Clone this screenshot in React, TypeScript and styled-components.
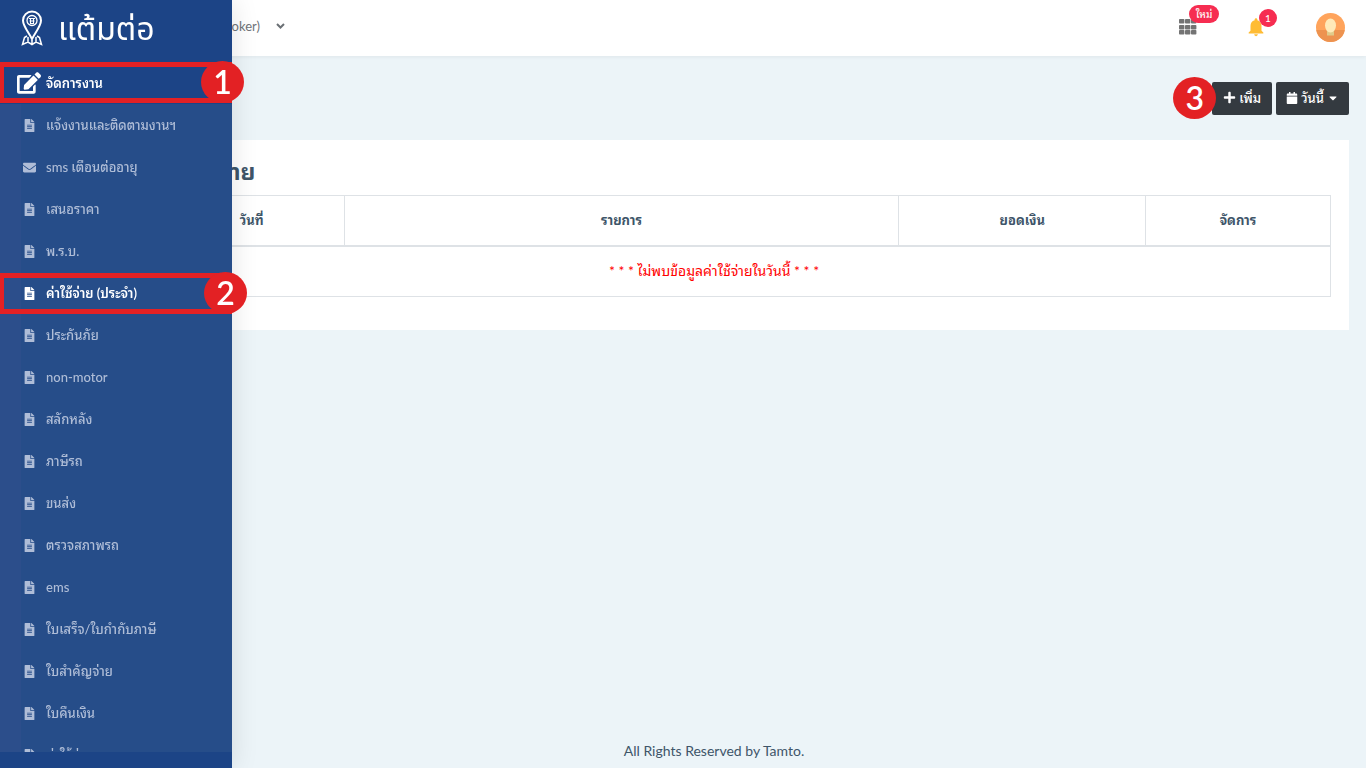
import React from "react";
import styled, { createGlobalStyle } from "styled-components";
import { FaEdit, FaFileAlt, FaEnvelope, FaPlus, FaCalendar, FaCaretDown } from "react-icons/fa";
import { MdNotifications } from "react-icons/md";

const GlobalStyle = createGlobalStyle`
  * { box-sizing: border-box; }
  body {
    margin: 0;
    background: #ecf4f8;
    color: #3e5569;
    font-family: Lato, "Noto Sans Thai Looped", Loma, Waree, "Noto Sans", sans-serif;
    font-size: 13px;
    line-height: 20px;
  }
  button { font: inherit; border: 0; padding: 0; background: none; cursor: pointer; }
  a { color: inherit; text-decoration: none; }
  svg { display: block; flex: none; }
`;

const Page = styled.div`
  display: flex;
  flex-direction: column;
  min-height: 100vh;
  padding-left: 62px;
`;

const TopBar = styled.header`
  display: flex;
  align-items: center;
  justify-content: space-between;
  height: 56px;
  padding: 0 21px 0 117px;
  background: #fff;
  box-shadow: 0 1px 4px rgba(0, 0, 0, 0.06);
`;

const AccountButton = styled.button`
  display: flex;
  align-items: center;
  gap: 16px;
  width: 106px;
  justify-content: flex-end;
  margin-bottom: 4px;
  color: #6f7479;
  white-space: nowrap;
`;

const Tools = styled.div`
  display: flex;
  align-items: center;
  margin-bottom: 2px;
`;

const ToolButton = styled.button<{ $gap?: number }>`
  position: relative;
  margin-right: ${(p) => p.$gap ?? 0}px;
`;

const Badge = styled.span<{ $wide?: boolean }>`
  position: absolute;
  left: ${(p) => (p.$wide ? 10 : 14)}px;
  top: ${(p) => (p.$wide ? -14 : -7)}px;
  width: ${(p) => (p.$wide ? 30 : 18)}px;
  height: 18px;
  border-radius: 9px;
  background: #f62d51;
  color: #fff;
  font-size: 10px;
  line-height: 18px;
  font-weight: 500;
  text-align: center;
`;

const Content = styled.main`
  flex: 1;
  padding: 26px 17px 0;
`;

const Actions = styled.div`
  display: flex;
  justify-content: flex-end;
  gap: 4px;
  margin-bottom: 25px;
`;

const DarkButton = styled.button<{ $inset: number }>`
  position: relative;
  display: flex;
  align-items: center;
  gap: 3px;
  height: 33px;
  && { padding: 0 ${(p) => p.$inset}px 2px; }
  border-radius: 2px;
  background: #343a40;
  color: #fff;
  font-weight: 500;
`;

const Card = styled.section`
  padding: 17px 18px 33px;
  background: #fff;
`;

const Title = styled.h1`
  margin: 0 0 10px;
  font-size: 23px;
  line-height: 28px;
  font-weight: 700;
`;

const Table = styled.table`
  width: 100%;
  table-layout: fixed;
  border-collapse: collapse;
  text-align: center;
  th, td { padding: 0 0 1px; border: 1px solid #dee2e6; }
  th { height: 50px; font-weight: 700; border-bottom-width: 2px; }
  td { height: 51px; }
`;

const EmptyCell = styled.td`
  color: #f00;
  font-size: 14px;
  font-weight: 400;
`;

const Footer = styled.footer`
  padding: 7px 0;
  font-size: 14px;
  text-align: center;
`;

const Sidebar = styled.aside`
  position: fixed;
  inset: 0 auto 0 0;
  display: flex;
  flex-direction: column;
  width: 232px;
  background: #1c4486;
  color: #fff;
  box-shadow: 2px 0 24px rgba(0, 0, 0, 0.1);
`;

const Brand = styled.a`
  display: flex;
  align-items: center;
  gap: 14px;
  height: 62px;
  padding: 0 20px 6px;
  font-family: Lato, "Noto Sans Thai", "Noto Sans", sans-serif;
  font-size: 32px;
  line-height: 40px;
  font-weight: 400;
`;

const GroupLink = styled.a`
  position: relative;
  display: flex;
  align-items: center;
  gap: 5px;
  height: 42px;
  padding-left: 17px;
  font-weight: 600;
`;

const Menu = styled.nav`
  flex: 1;
  min-height: 0;
  overflow: hidden;
  margin-bottom: 16px;
  background: linear-gradient(90deg, #2c4e8b 21px, #264d89 21px);
`;

const MenuList = styled.ul`
  margin: 0;
  padding: 0;
  list-style: none;
`;

const MenuLink = styled.a<{ $active?: boolean }>`
  display: flex;
  align-items: center;
  gap: 10px;
  height: 42px;
  padding-left: 23px;
  color: ${(p) => (p.$active ? "#fff" : "#afbdd7")};
  font-weight: ${(p) => (p.$active ? 600 : 500)};
`;

const Outline = styled.span<{ $top: number }>`
  position: absolute;
  left: 0;
  top: ${(p) => p.$top}px;
  width: 232px;
  height: 41px;
  border: solid #e32124;
  border-width: 5px 0 5px 4px;
  pointer-events: none;
`;

const Step = styled.span<{ $left: number; $top: number }>`
  position: absolute;
  left: ${(p) => p.$left}px;
  top: ${(p) => p.$top}px;
  width: 43px;
  height: 42px;
  border-radius: 50%;
  background: #e32124;
  color: #fff;
  font-family: Lato, sans-serif;
  font-size: 32px;
  line-height: 41px;
  font-weight: 600;
  text-align: center;
`;

const items = [
  "แจ้งงานและติดตามงานฯ",
  "sms เตือนต่ออายุ",
  "เสนอราคา",
  "พ.ร.บ.",
  "ค่าใช้จ่าย (ประจำ)",
  "ประกันภัย",
  "non-motor",
  "สลักหลัง",
  "ภาษีรถ",
  "ขนส่ง",
  "ตรวจสภาพรถ",
  "ems",
  "ใบเสร็จ/ใบกำกับภาษี",
  "ใบสำคัญจ่าย",
  "ใบคืนเงิน",
  "ค่าใช้จ่าย",
];

const PinLogo = () => (
  <svg width="24" height="38" viewBox="0 0 24 38" fill="none" stroke="#fff" strokeWidth="2">
    <path d="M12 30C9 24 3 17 3 11.500A9 9 0 0 1 21 11.500C21 17 15 24 12 30Z" />
    <circle cx="12" cy="11.500" r="5" strokeWidth="1.300" />
    <path d="M9 9.500h6M9.500 12h5M10.500 10v4.500h3V10" strokeWidth="1.100" />
    <path d="M7 27L4.500 28.500L2.500 35.500L8 33L12 35.500L16 33L21.500 35.500L19.500 28.500L17 27M8 28v5M16 28v5M12 31v4" strokeWidth="1.500" />
  </svg>
);

const GridIcon = () => (
  <svg width="18" height="16" viewBox="0 0 18 16" fill="#747474">
    {[0, 6, 12].map((x) =>
      [0, 6, 11].map((y) => <rect key={`${x}-${y}`} x={x} y={y} width="5.400" height="4.600" rx="0.800" />)
    )}
  </svg>
);

const Avatar = () => (
  <svg width="29" height="29" viewBox="0 0 29 29">
    <defs><clipPath id="face"><circle cx="14.500" cy="14.500" r="14.500" /></clipPath></defs>
    <g clipPath="url(#face)">
      <path fill="#ffa45c" d="M0 0h29v29H0z" />
      <path fill="#ed9350" d="M0 17h29v12H0z" />
      <path fill="#e0cb8b" d="M11 16h7v6.500h-7z" />
      <ellipse cx="14.500" cy="12.500" rx="5.500" ry="7" fill="#ffeab8" />
    </g>
  </svg>
);

export default function App() {
  return (
    <>
      <GlobalStyle />
      <Page>
        <TopBar>
          <AccountButton>
            (Broker)
            <svg width="9" height="6" viewBox="0 0 9 6" fill="none" stroke="#6b7075" strokeWidth="2">
              <path d="M1 1l3.500 3.500L8 1" />
            </svg>
          </AccountButton>
          <Tools>
            <ToolButton $gap={48} aria-label="แอป"><GridIcon /><Badge $wide>ใหม่</Badge></ToolButton>
            <ToolButton $gap={49} aria-label="แจ้งเตือน"><MdNotifications size={22} color="#ffbc34" /><Badge>1</Badge></ToolButton>
            <ToolButton aria-label="บัญชี"><Avatar /></ToolButton>
          </Tools>
        </TopBar>
        <Content>
          <Actions>
            <DarkButton $inset={11}><FaPlus size={13} />เพิ่ม<Step $left={-39} $top={-5}>3</Step></DarkButton>
            <DarkButton $inset={10}><FaCalendar size={12} />วันนี้<FaCaretDown size={12} /></DarkButton>
          </Actions>
          <Card>
            <Title>รายการค่าใช้จ่าย</Title>
            <Table>
              <colgroup>
                {[5, 15, 45, 20, 15].map((w, i) => <col key={i} width={`${w}%`} />)}
              </colgroup>
              <thead>
                <tr><th scope="col" /><th scope="col">วันที่</th><th scope="col">รายการ</th><th scope="col">ยอดเงิน</th><th scope="col">จัดการ</th></tr>
              </thead>
              <tbody>
                <tr><EmptyCell colSpan={5}>* * * ไม่พบข้อมูลค่าใช้จ่ายในวันนี้ * * *</EmptyCell></tr>
              </tbody>
            </Table>
          </Card>
        </Content>
        <Footer>All Rights Reserved by Tamto.</Footer>
      </Page>
      <Sidebar>
        <Brand href="#"><PinLogo />แต้มต่อ</Brand>
        <GroupLink href="#"><FaEdit size={24} />จัดการงาน</GroupLink>
        <Menu>
          <MenuList>
            {items.map((label, i) => (
              <li key={label}>
                <MenuLink href="#" $active={i === 4}>
                  {i === 1 ? <FaEnvelope size={13} /> : <FaFileAlt size={13} />}
                  {label}
                </MenuLink>
              </li>
            ))}
          </MenuList>
        </Menu>
        <Outline $top={62} />
        <Step $left={201} $top={61}>1</Step>
        <Outline $top={273} />
        <Step $left={204} $top={272}>2</Step>
      </Sidebar>
    </>
  );
}
